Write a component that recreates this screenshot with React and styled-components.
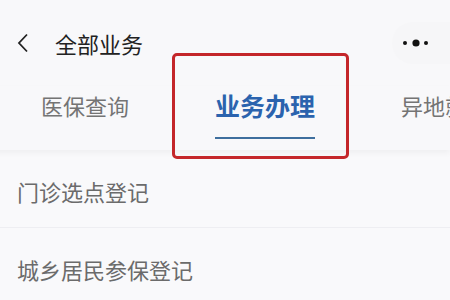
import styled, { createGlobalStyle } from 'styled-components';

const GlobalStyle = createGlobalStyle`
  html, body {
    margin: 0;
    padding: 0;
    background: #f9f9fb;
    font-family: "Noto Sans CJK SC", "Noto Sans", sans-serif;
  }
`;

const tabs = ['医保查询', '业务办理', '异地就医'];
const items = ['门诊选点登记', '城乡居民参保登记'];

const App = () => {
  return (
    <Page>
      <GlobalStyle />
      <Header>
        <Back>
          <svg width="12" height="20" viewBox="0 0 12 20">
            <polyline points="10,1.5 2,10 10,18.5" fill="none" stroke="#222" strokeWidth="1.8" strokeLinejoin="miter" />
          </svg>
        </Back>
        <Title>全部业务</Title>
        <Capsule>
          <svg width="30" height="10" viewBox="0 0 30 10">
            <circle cx="4" cy="5" r="2" fill="#111" />
            <circle cx="15" cy="5" r="3.6" fill="#111" />
            <circle cx="25" cy="5" r="2" fill="#111" />
          </svg>
        </Capsule>
      </Header>
      <TabBar>
        {tabs.map((t, i) => (
          <Tab key={t} $active={i === 1}>
            <TabLabel $active={i === 1}>{t}</TabLabel>
          </Tab>
        ))}
      </TabBar>
      <List>
        {items.map((t) => (
          <Row key={t}>{t}</Row>
        ))}
      </List>
      <Highlight />
    </Page>
  );
};

const Page = styled.div`
  position: relative;
  width: 450px;
  height: 300px;
  overflow: hidden;
  background: #f9f9fb;
`;

const Header = styled.div`
  height: 86px;
  display: flex;
  align-items: center;
  padding-left: 17px;
  background: #f8f8fa;
`;

const Back = styled.div`
  width: 12px;
  height: 20px;
  display: flex;
  margin-right: 26px;
`;

const Title = styled.div`
  font-size: 22px;
  color: #222;
  line-height: 1;
  flex: 1;
`;

const Capsule = styled.div`
  width: 58px;
  height: 42px;
  display: flex;
  align-items: center;
  padding-left: 9px;
  box-sizing: border-box;
  background: #f6f6f8;
  border-radius: 21px 0 0 21px;
`;

const TabBar = styled.div`
  height: 64px;
  display: flex;
  margin-left: -5px;
  background: #f8f8fa;
  box-shadow: 0 3px 6px rgba(0, 0, 0, 0.045);
  position: relative;
`;

const Tab = styled.div`
  flex: 0 0 180px;
  display: flex;
  justify-content: center;
  padding-top: 5px;
`;

const TabLabel = styled.div`
  font-size: ${(p) => (p.$active ? '25px' : '22px')};
  font-weight: ${(p) => (p.$active ? 700 : 400)};
  color: ${(p) => (p.$active ? '#2b63ae' : '#747474')};
  line-height: 28px;
  height: 48px;
  box-sizing: border-box;
  white-space: nowrap;
  border-bottom: ${(p) => (p.$active ? '2px solid #3f6f9e' : 'none')};
`;

const List = styled.div`
  display: flex;
  flex-direction: column;
`;

const Row = styled.div`
  height: 78px;
  display: flex;
  align-items: center;
  padding-left: 17px;
  font-size: 22px;
  color: #6b6b6b;
  border-bottom: 1px solid #eeeef2;
  padding-top: 4px;
  box-sizing: border-box;
`;

const Highlight = styled.div`
  position: absolute;
  left: 172px;
  top: 53px;
  width: 177px;
  height: 106px;
  box-sizing: border-box;
  border: 3px solid #c4262a;
  border-radius: 5px;
  pointer-events: none;
`;

export default App;
